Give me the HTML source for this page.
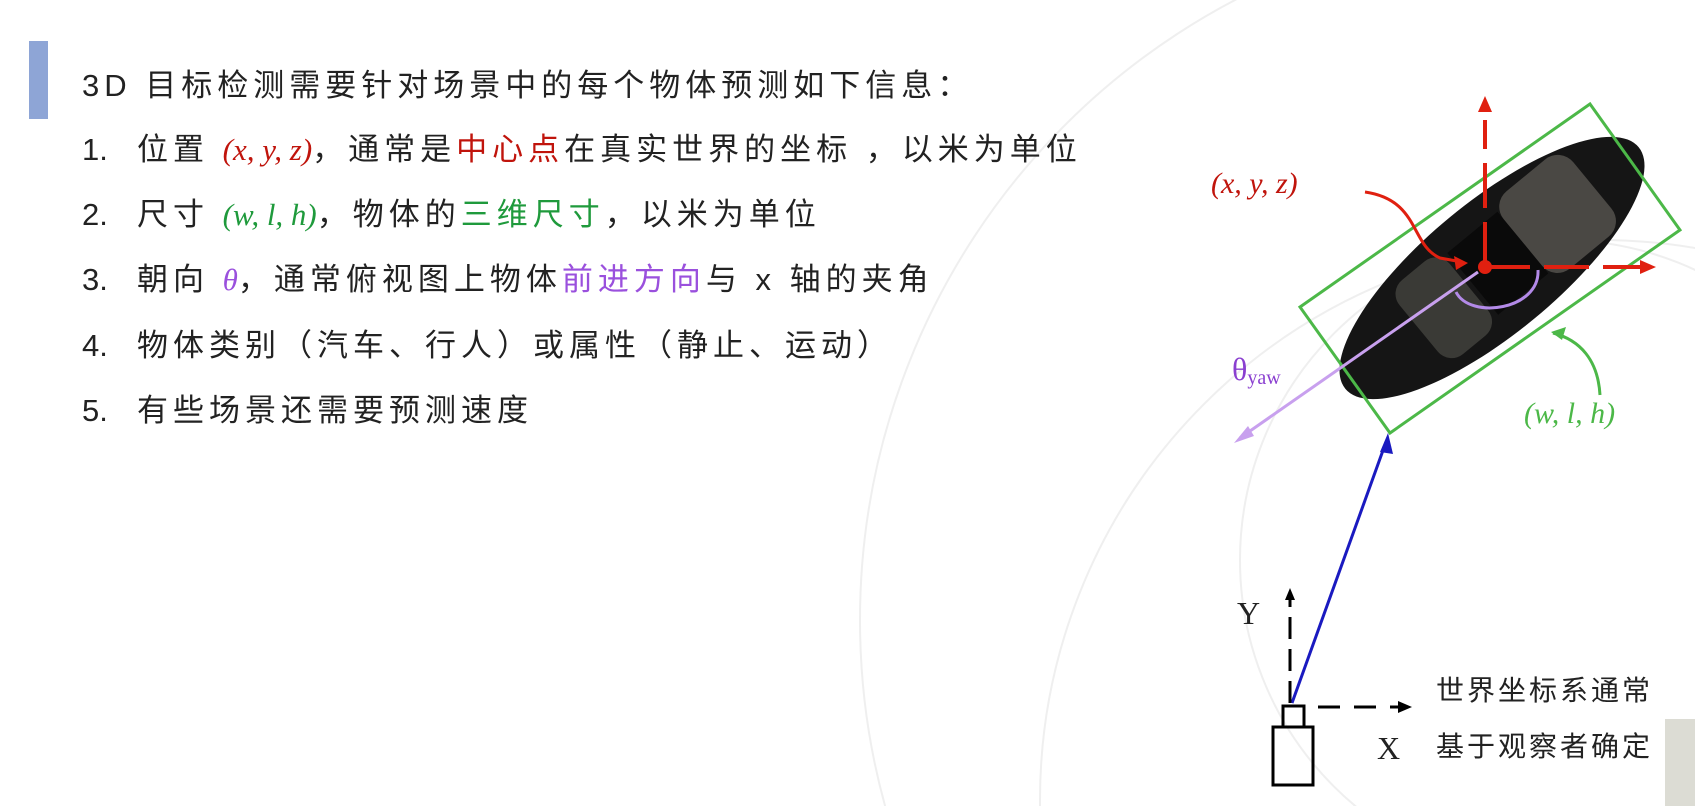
<!DOCTYPE html>
<html style="overflow:hidden"><head><meta charset="utf-8"><style>
body{margin:0;width:1695px;height:806px;background:#fff;overflow:hidden;position:relative;font-family:"Liberation Sans","Noto Sans CJK SC",sans-serif;color:#222}
.bar{position:absolute;left:29px;top:41px;width:19px;height:78px;background:#8ea5d6}
.l{position:absolute;left:82px;font-size:31px;letter-spacing:5px;white-space:nowrap;line-height:40px}
.n{display:inline-block;width:55px;letter-spacing:0}
.m{font-family:"Liberation Serif","DejaVu Serif",serif;font-style:italic;letter-spacing:0}
.r{color:#c0140c}.g{color:#1f9a3c}.p{color:#9a50dd}
</style></head><body>
<svg width="1695" height="806" style="position:absolute;left:0;top:0;overflow:hidden">
<g fill="none" stroke="#efefef" stroke-width="2">
<circle cx="1560" cy="620" r="700"/>
<circle cx="1600" cy="800" r="560"/>
<circle cx="1560" cy="560" r="320"/>
</g>
<rect x="1665" y="719" width="30" height="87" fill="#dcdcd4"/>
<g transform="translate(1492,268) rotate(-39.5)">
<ellipse cx="0" cy="0" rx="190" ry="66" fill="#151515"/>
<rect x="-95" y="-48" width="65" height="96" rx="18" fill="#3a3a36"/>
<rect x="40" y="-50" width="90" height="100" rx="20" fill="#4a4844"/>
<rect x="-25" y="-40" width="65" height="80" fill="#0a0a0a"/>
</g>
<polygon points="1590,104 1680,230 1390,433 1300,307" fill="none" stroke="#4cb848" stroke-width="3"/>
<g stroke="#e02010" stroke-width="4" fill="none">
<line x1="1485" y1="267" x2="1485" y2="120" stroke-dasharray="45,14"/>
<line x1="1485" y1="267" x2="1640" y2="267" stroke-dasharray="45,14"/>
<path d="M1365,192 C1420,200 1410,245 1440,258 L1462,262" stroke-width="3"/>
</g>
<circle cx="1485" cy="267" r="7" fill="#e02010"/>
<polygon points="1485,96 1478,112 1492,112" fill="#e02010"/>
<polygon points="1656,267 1640,260 1640,274" fill="#e02010"/>
<polygon points="1468,263 1454,256 1456,270" fill="#e02010"/>
<line x1="1478" y1="272" x2="1240" y2="438" stroke="#c8a0ee" stroke-width="3"/>
<polygon points="1234,443 1248,426 1254,436" fill="#c8a0ee"/>
<path d="M1538,270 C1540,310 1470,320 1456,292" fill="none" stroke="#b38ae8" stroke-width="3"/>
<path d="M1600,395 C1598,360 1580,340 1553,333" fill="none" stroke="#4cb848" stroke-width="3"/>
<polygon points="1551,332 1566,327 1562,340" fill="#4cb848"/>
<line x1="1292" y1="703" x2="1386" y2="442" stroke="#1a1ac0" stroke-width="3"/>
<polygon points="1388,433 1380,452 1393,454" fill="#1a1ac0"/>
<line x1="1290" y1="703" x2="1290" y2="600" stroke="#000" stroke-width="3" stroke-dasharray="22,10"/>
<polygon points="1290,588 1285,600 1295,600" fill="#000"/>
<line x1="1318" y1="707" x2="1398" y2="707" stroke="#000" stroke-width="3" stroke-dasharray="22,14"/>
<polygon points="1412,707 1398,701 1398,713" fill="#000"/>
<rect x="1283" y="706" width="21" height="21" fill="none" stroke="#000" stroke-width="3"/>
<rect x="1273" y="727" width="40" height="58" fill="none" stroke="#000" stroke-width="3"/>
<g font-family="Liberation Serif,serif" font-size="32" fill="#222">
<text x="1237" y="624">Y</text>
<text x="1377" y="759">X</text>
</g>
<g font-family="Liberation Serif,serif" font-size="30" font-style="italic" fill="#c0140c"><text x="1211" y="193">(x, y, z)</text></g>
<g font-family="Liberation Serif,serif" font-size="30" font-style="italic" fill="#4cb848"><text x="1524" y="423">(w, l, h)</text></g>
<g font-family="Liberation Serif,serif" fill="#8a3fd0"><text x="1232" y="380" font-size="32">θ<tspan font-size="20" dy="4">yaw</tspan></text></g>
<g font-family="Liberation Sans,Noto Sans CJK SC,sans-serif" font-size="28" fill="#222">
<text x="1436" y="700" letter-spacing="3">世界坐标系通常</text>
<text x="1436" y="756" letter-spacing="3">基于观察者确定</text>
</g>
</svg>
<div class="bar"></div>
<div class="l" style="top:66px">3D 目标检测需要针对场景中的每个物体预测如下信息：</div>
<div class="l" style="top:130px"><span class="n">1.</span>位置 <span class="m r">(x, y, z)</span>，通常是<span class="r">中心点</span>在真实世界的坐标 ，以米为单位</div>
<div class="l" style="top:195px"><span class="n">2.</span>尺寸 <span class="m g">(w, l, h)</span>，物体的<span class="g">三维尺寸</span>，以米为单位</div>
<div class="l" style="top:260px"><span class="n">3.</span>朝向 <span class="m p">θ</span>，通常俯视图上物体<span class="p">前进方向</span>与 x 轴的夹角</div>
<div class="l" style="top:326px"><span class="n">4.</span>物体类别（汽车、行人）或属性（静止、运动）</div>
<div class="l" style="top:391px"><span class="n">5.</span>有些场景还需要预测速度</div>
</body></html>
